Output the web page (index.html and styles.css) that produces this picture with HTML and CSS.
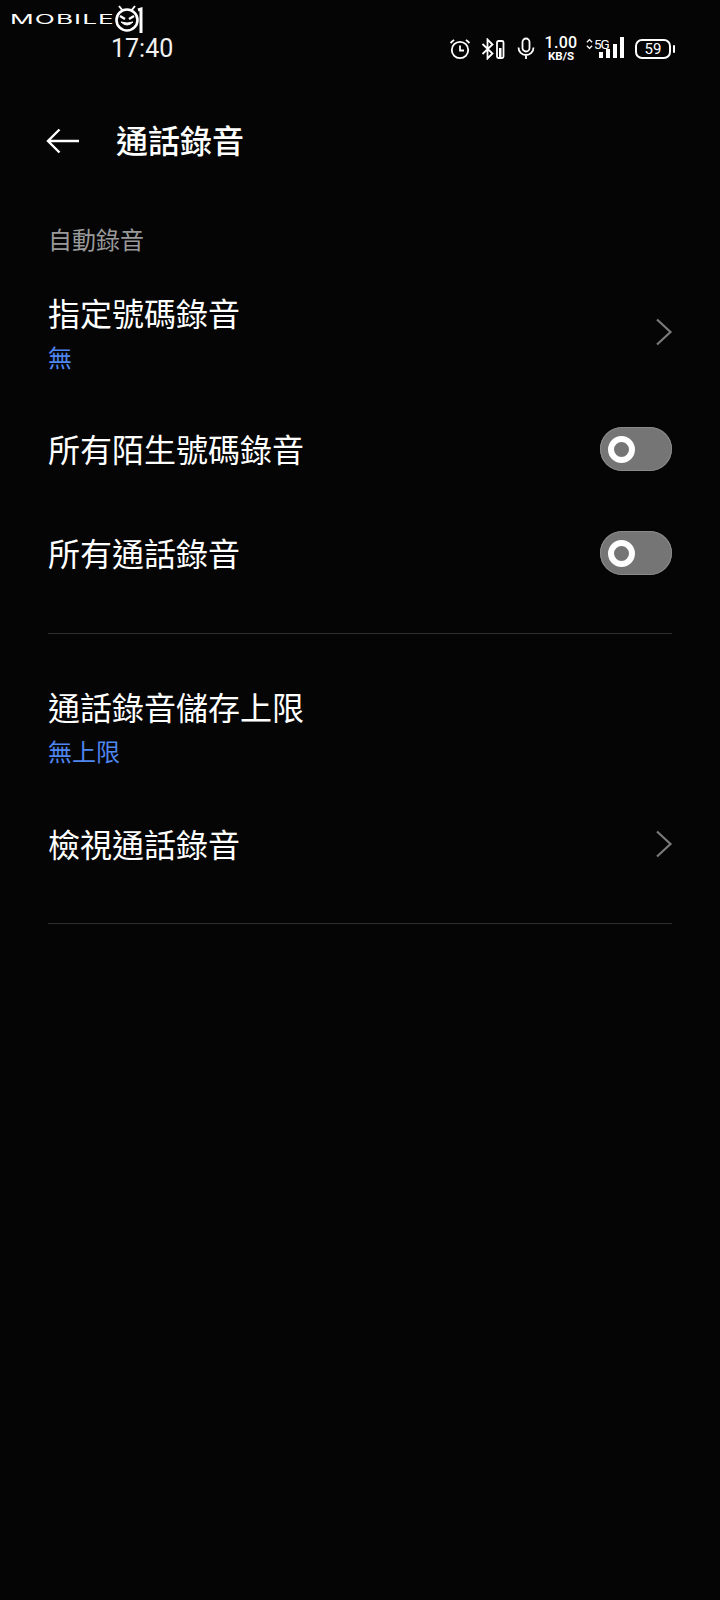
FILE: index.html
```html
<!DOCTYPE html>
<html lang="zh-Hant">
<head>
<meta charset="utf-8">
<title>通話錄音</title>
<link rel="stylesheet" href="styles.css">
</head>
<body>
<div class="screen">
  <div class="watermark">
    <span class="wm-text">MOBILE</span>
    <svg class="wm-logo" width="30" height="30" viewBox="0 0 30 30" fill="none" stroke="#fff">
      <path d="M4 2l4 5M20 2l-4 5" stroke-width="2"/>
      <circle cx="12" cy="16" r="10.5" stroke-width="2.6"/>
      <path d="M5 12l5 3M19 12l-5 3" stroke-width="2.4"/>
      <path d="M6 18q6 6 12 0q-6 2-12 0z" fill="#fff" stroke-width="1"/>
      <path d="M23 6l3-1v24" stroke-width="3"/>
    </svg>
  </div>
  <div class="status">
    <span class="time">17:40</span>
    <div class="status-icons">
      <svg width="22" height="22" viewBox="0 0 22 22" fill="none" stroke="#fff" stroke-width="1.8" class="i-alarm">
        <circle cx="11" cy="12" r="8.2"/>
        <path d="M11 7.5V12.5H15M1.5 5L5 1.8M20.5 5L17 1.8"/>
      </svg>
      <svg width="24" height="22" viewBox="0 0 24 22" fill="none" stroke="#fff" class="i-bt">
        <path d="M1.5 6l10 9.5-5 5V1.500l5 5-10 9.500" stroke-width="1.800"/>
        <rect x="16" y="3" width="6.500" height="17" rx="1.500" stroke-width="1.800"/>
        <rect x="18" y="10" width="2.500" height="9" fill="#fff" stroke="none"/>
      </svg>
      <svg width="20" height="24" viewBox="0 0 20 24" fill="none" stroke="#fff" stroke-width="1.800" class="i-mic">
        <rect x="6.500" y="1.500" width="7" height="13" rx="3.500"/>
        <path d="M2.500 10.500a7.500 7.500 0 0 0 15 0M10 18v4"/>
      </svg>
      <div class="speed"><span class="speed-num">1.00</span><span class="speed-unit">KB/S</span></div>
      <div class="net">
        <div class="net-label"><svg width="7" height="12" viewBox="0 0 8 12" fill="none" stroke="#fff" stroke-width="1.500"><path d="M1 4l3-3 3 3M1 8l3 3 3-3"/></svg><span>5G</span></div>
        <div class="bars"><i class="bar b1"></i><i class="bar b2"></i><i class="bar b3"></i><i class="bar b4"></i></div>
      </div>
      <div class="battery"><span class="batt-body">59</span><i class="batt-tip"></i></div>
    </div>
  </div>

  <header class="title-bar">
    <svg class="back" width="34" height="26" viewBox="0 0 34 26" fill="none" stroke="#fff" stroke-width="2.400">
      <path d="M33 13H2M13.500 1.500L2 13l11.500 11.500"/>
    </svg>
    <h1>通話錄音</h1>
  </header>

  <div class="section-label">自動錄音</div>

  <div class="row r1">
    <div><div class="name">指定號碼錄音</div><div class="sub">無</div></div>
    <svg class="chev" width="18" height="28" viewBox="0 0 18 28" fill="none" stroke="#7a7a7a" stroke-width="2.200"><path d="M2 1.500L15.500 14 2 26.500"/></svg>
  </div>
  <div class="row toggle-row r2">
    <div class="name">所有陌生號碼錄音</div>
    <span class="switch"><i class="knob"></i></span>
  </div>
  <div class="row toggle-row r3">
    <div class="name">所有通話錄音</div>
    <span class="switch"><i class="knob"></i></span>
  </div>
  <hr class="div d1">
  <div class="row r4">
    <div><div class="name">通話錄音儲存上限</div><div class="sub">無上限</div></div>
  </div>
  <div class="row r5">
    <div class="name">檢視通話錄音</div>
    <svg class="chev" width="18" height="28" viewBox="0 0 18 28" fill="none" stroke="#7a7a7a" stroke-width="2.200"><path d="M2 1.500L15.500 14 2 26.500"/></svg>
  </div>
  <hr class="div d2">
</div>
</body>
</html>
```

FILE: styles.css
```css
* { box-sizing: border-box; }
html, body { margin: 0; padding: 0; background: #050505; }
body { font-family: "Noto Sans CJK TC", "Noto Sans", sans-serif; color: #fff; }
.screen { position: relative; width: 720px; height: 1600px; overflow: hidden; background: #050505; }

.watermark { position: absolute; left: 10px; top: 4px; display: flex; align-items: center; height: 30px; }
.wm-text { display: inline-block; width: 105px; font: 400 12.5px/1 Inter, sans-serif; letter-spacing: .5px; transform: scaleX(2.1); transform-origin: 0 50%; white-space: nowrap; margin-top: 2px; }

.status { height: 78px; padding: 19px 45px 0 111px; display: flex; justify-content: space-between; align-items: center; }
.time { font: 400 25px/1 Roboto, sans-serif; color: #f2f2f2; }
.status-icons { display: flex; align-items: center; height: 30px; }
.i-alarm { margin-right: 10px; }
.i-bt { margin-right: 11px; }
.i-mic { margin-right: 8px; }
.speed { display: flex; flex-direction: column; align-items: center; width: 34px; font-family: Roboto, sans-serif; font-weight: 500; line-height: 1; margin-right: 6px; }
.speed-num { font-size: 16px; line-height: 16px; letter-spacing: .3px; }
.speed-unit { font-size: 11.5px; line-height: 11px; font-weight: 700; }
.net { position: relative; width: 40px; height: 24px; margin-right: 11px; display: flex; justify-content: flex-end; }
.net-label { position: absolute; left: 2px; top: 1px; display: flex; align-items: center; gap: 1px; font: 400 13.5px/12px Roboto, sans-serif; letter-spacing: -1px; }
.bars { display: flex; align-items: flex-end; gap: 3px; height: 21px; }
.bar { display: block; width: 4px; background: #fff; }
.b1 { height: 6px; } .b2 { height: 9px; } .b3 { height: 14px; } .b4 { height: 21px; }
.battery { display: flex; align-items: center; gap: 2px; }
.batt-body { width: 36px; height: 20px; border: 2px solid #fff; border-radius: 7px; font: 400 15px/16px Roboto, sans-serif; text-align: center; }
.batt-tip { display: block; width: 2px; height: 8px; background: #fff; border-radius: 1px; }

.title-bar { height: 67px; margin-top: 27px; padding-left: 46px; display: flex; align-items: center; }
.back { margin: 4px 36px 0 0; }
h1 { margin: 0; font-size: 32px; font-weight: 500; line-height: 1; }

.section-label { margin-top: 50px; padding-left: 48px; font-size: 24px; line-height: 34px; color: #999; }

.row { display: flex; align-items: center; justify-content: space-between; margin: 0 48px; }
.name { font-size: 32px; line-height: 44px; color: #fff; }
.sub { font-size: 24px; line-height: 34px; color: #4f86ef; margin-top: 6px; }
.chev { margin-right: -1px; }
.r1 { margin-top: 34px; }
.toggle-row { height: 44px; }
.toggle-row .name { margin-bottom: 2px; }
.r2 { margin-top: 53px; }
.r3 { margin-top: 60px; }
.r4 { margin-top: 50px; }
.r5 { margin-top: 53px; height: 44px; }
.r5 .chev { margin-top: 2px; }
.switch { display: flex; align-items: center; width: 72px; height: 44px; padding-left: 8px; border-radius: 22px; background: #757575; box-shadow: inset 0 0 0 1px #8a8a8a; }
.knob { display: block; width: 27px; height: 27px; border-radius: 50%; border: 6px solid #fff; }
.div { margin: 0 48px; border: 0; height: 1px; background: #2e2e2e; }
.d1 { margin-top: 58px; }
.d2 { margin-top: 58px; }
```
